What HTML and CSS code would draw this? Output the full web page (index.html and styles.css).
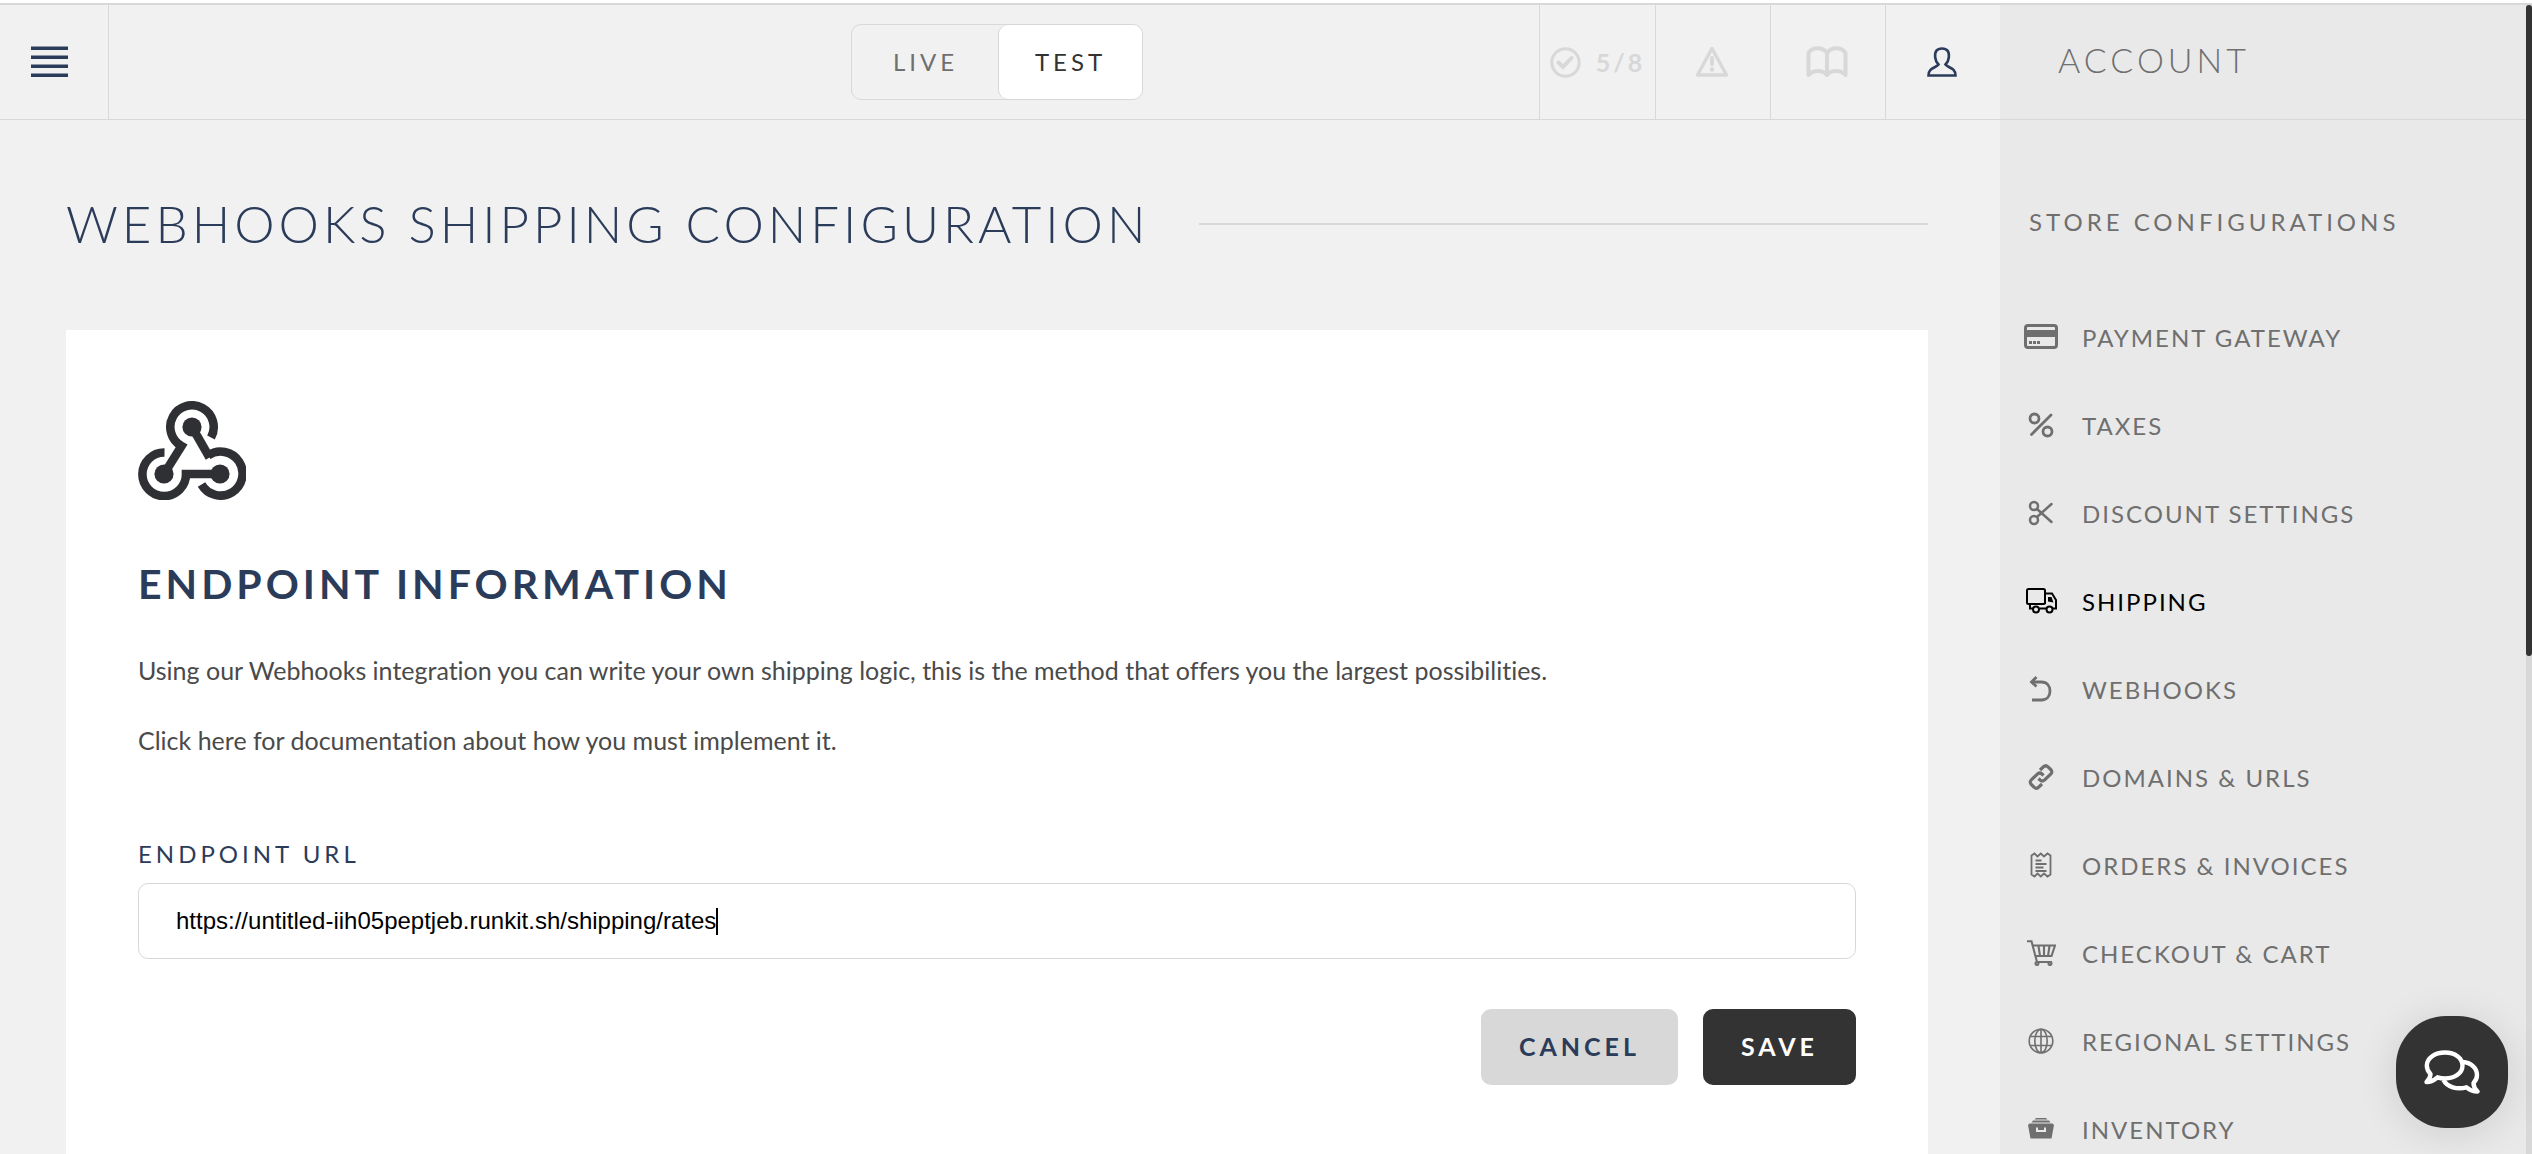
FILE: index.html
```html
<!DOCTYPE html>
<html lang="en">
<head>
<meta charset="utf-8">
<meta name="viewport" content="width=device-width, initial-scale=1">
<title>Webhooks Shipping Configuration</title>
<link rel="stylesheet" href="styles.css">
</head>
<body>
<div class="app">
  <div class="workspace">
    <header class="topbar">
      <button class="menu-button" type="button" aria-label="Menu">
        <svg width="38" height="32" viewBox="0 0 38 32" fill="currentColor"><path d="M0 0.500h37v3.500H0zM0 9.500h37v3.500H0zM0 18.500h37v3.500H0zM0 27.500h37v3.500H0z"/></svg>
      </button>
      <div class="mode-area">
        <div class="mode-switch">
          <button class="mode" type="button">LIVE</button>
          <button class="mode mode-active" type="button">TEST</button>
        </div>
      </div>
      <nav class="tools" aria-label="Tools">
        <a class="tool tool-progress" href="#">
          <svg width="31" height="31" viewBox="0 0 31 31" fill="none" stroke="currentColor" stroke-width="3"><circle cx="15.500" cy="15.500" r="13.700"/><path d="M8.500 15.500l4.500 4.500 8.500-9" stroke-width="4" stroke-linecap="round"/></svg>
          <span>5/8</span>
        </a>
        <a class="tool" href="#" aria-label="Alerts">
          <svg width="34" height="32" viewBox="0 0 34 32" fill="none" stroke="currentColor" stroke-width="3.400" stroke-linejoin="round"><path d="M17 2.500L31.500 29H2.500z"/><path d="M17 12v6" stroke-width="4" stroke-linecap="round"/><circle cx="17" cy="23.500" r="2.200" fill="currentColor" stroke="none"/></svg>
        </a>
        <a class="tool" href="#" aria-label="Documentation">
          <svg width="42" height="32" viewBox="0 0 42 32" fill="none" stroke="currentColor" stroke-width="4" stroke-linejoin="round" stroke-linecap="round"><path d="M21 29C17 23.500 7 23.500 2.500 29V7C6 .500 17 .500 21 7C25 .500 36 .500 39.500 7V29C35 23.500 25 23.500 21 29V7"/></svg>
        </a>
        <a class="tool tool-active" href="#" aria-label="Account">
          <svg width="30" height="30" viewBox="0 0 30 30" fill="none" stroke="currentColor" stroke-width="2.600"><path d="M11.500 17.500C9 15 8.500 13.500 8.200 10.500C7.500 4 10 1.500 15 1.500S22.500 4 21.800 10.500C21.500 13.500 21 15 18.500 17.500C21 21 28.500 20.500 28.500 28.500H1.500C1.500 20.500 9 21 11.500 17.500z"/></svg>
        </a>
      </nav>
    </header>

    <main class="content">
      <div class="page-heading">
        <h1 class="page-title">WEBHOOKS SHIPPING CONFIGURATION</h1>
      </div>
      <section class="card">
        <svg class="logo" width="108" height="99" viewBox="0 0 108 99" fill="none" stroke="currentColor" stroke-width="8.600"><path d="M73 36.500A21.700 21.700 0 1 0 43.500 45L26 73"/><path d="M54 26L71.500 56.500" /><path d="M70 54.500A22 22 0 1 1 63.500 83.500"/><path d="M26.500 51.500A21.800 21.800 0 1 0 48 73H82"/><g fill="currentColor" stroke="none"><circle cx="54" cy="26" r="9.600"/><circle cx="26" cy="73" r="9.600"/><circle cx="82" cy="73" r="9.600"/></g></svg>
        <h2 class="section-title">ENDPOINT INFORMATION</h2>
        <p class="text">Using our Webhooks integration you can write your own shipping logic, this is the method that offers you the largest possibilities.</p>
        <p class="text"><a class="text-link" href="#">Click here for documentation about how you must implement it.</a></p>
        <form class="endpoint-form">
          <label class="field-label" for="endpoint">ENDPOINT URL</label>
          <div class="field">
            <input class="field-input" id="endpoint" type="text" value="https://untitled-iih05peptjeb.runkit.sh/shipping/rates">
            <span class="caret"></span>
          </div>
          <div class="actions">
            <button class="button button-cancel" type="button">CANCEL</button>
            <button class="button button-save" type="submit">SAVE</button>
          </div>
        </form>
      </section>
    </main>
  </div>

  <aside class="sidebar">
    <h2 class="sidebar-title">ACCOUNT</h2>
    <h3 class="group-title">STORE CONFIGURATIONS</h3>
    <nav class="side-nav" aria-label="Store configurations">
      <a class="side-link" href="#"><span class="side-icon"><svg width="34" height="26" viewBox="0 0 34 26"><rect x="1.500" y="1.500" width="31" height="22" rx="2.500" fill="none" stroke="currentColor" stroke-width="3"/><path d="M2 6h30v7H2zM5 17h3v3H5zM9 17h3v3H9zM13 17h3v3h-3z" fill="currentColor"/></svg></span>PAYMENT GATEWAY</a>
      <a class="side-link" href="#"><span class="side-icon"><svg width="26" height="26" viewBox="0 0 26 26" fill="none" stroke="currentColor" stroke-width="2.800" stroke-linecap="round"><circle cx="6.500" cy="6.500" r="4.500"/><circle cx="19.500" cy="19.500" r="4.500"/><path d="M23 3L3.500 22.500"/></svg></span>TAXES</a>
      <a class="side-link" href="#"><span class="side-icon"><svg width="26" height="26" viewBox="0 0 26 26" fill="none" stroke="currentColor" stroke-width="2.500" stroke-linecap="round"><circle cx="6" cy="6" r="4"/><circle cx="6" cy="20" r="4"/><path d="M9 9L23.500 22M9 17L23.500 4"/></svg></span>DISCOUNT SETTINGS</a>
      <a class="side-link side-link-active" href="#"><span class="side-icon"><svg width="31" height="26" viewBox="0 0 31 26" fill="none" stroke="currentColor" stroke-width="2"><rect x="1" y="1" width="18" height="15" rx="1.500"/><path d="M4 16v4.500h3M13.500 20.500h7M26.500 20.500H30V12L26 5.500h-7V16"/><circle cx="10" cy="21.500" r="3"/><circle cx="23.500" cy="21.500" r="3"/><path d="M22 9h3.500l2 5.500-5.500-1z" fill="currentColor" stroke="none"/></svg></span>SHIPPING</a>
      <a class="side-link" href="#"><span class="side-icon"><svg width="24" height="26" viewBox="0 0 24 26" fill="none" stroke="currentColor" stroke-width="2.800"><path d="M3 6H12.500C18 6 21 10 21 15S18 24 12.500 24H3"/><path d="M7.500 1L2.500 6l5 4.500"/></svg></span>WEBHOOKS</a>
      <a class="side-link" href="#"><span class="side-icon"><svg width="26" height="26" viewBox="0 0 26 26" fill="none" stroke="currentColor" stroke-width="3.200"><path d="M12 6L15.500 2.800C17 1.400 18.500 1.400 20 2.800L22.700 5.500C24.200 7 24.200 8.800 22.700 10.200L16.500 16C15 17.300 13.500 17.300 12 16L10.500 14.500"/><path d="M14 20L10.500 23.200C9 24.600 7.500 24.600 6 23.200L3.300 20.500C1.800 19 1.800 17.200 3.300 15.800L9.500 10C11 8.700 12.500 8.700 14 10L15.500 11.500"/></svg></span>DOMAINS &amp; URLS</a>
      <a class="side-link" href="#"><span class="side-icon"><svg width="22" height="26" viewBox="0 0 22 26" fill="none" stroke="currentColor" stroke-width="1.800"><path d="M1.500 3.500L4.500 1.500l3 3 3.300-3 3.200 3 3.500-3 3 2v19l-3 2-3.500-3-3.200 3-3.300-3-3 3-3-2z"/><path d="M5.500 8.500h6M5.500 12h11M5.500 15.500h8M5.500 19h11"/></svg></span>ORDERS &amp; INVOICES</a>
      <a class="side-link" href="#"><span class="side-icon"><svg width="29" height="26" viewBox="0 0 29 26" fill="none" stroke="currentColor" stroke-width="2.100"><path d="M0 1.200h4.500L10 22h15M5.500 5.500H28L24.500 16H8.500M11.500 6l1.500 10M17 6v10M22.500 6L21 16"/><circle cx="10" cy="23.500" r="1.500"/><circle cx="23" cy="23.500" r="1.500"/></svg></span>CHECKOUT &amp; CART</a>
      <a class="side-link" href="#"><span class="side-icon"><svg width="26" height="26" viewBox="0 0 26 26" fill="none" stroke="currentColor" stroke-width="1.600"><circle cx="13" cy="13" r="11.800"/><ellipse cx="13" cy="13" rx="6.200" ry="11.800"/><path d="M13 1v24M2.500 8.500h21M2.500 17.500h21"/></svg></span>REGIONAL SETTINGS</a>
      <a class="side-link" href="#"><span class="side-icon"><svg width="26" height="22" viewBox="0 0 26 22" fill="currentColor"><path d="M8 0h10l1.500 1.500h-13zM5 2.500h16l1.500 2h-19z"/><path fill-rule="evenodd" d="M1.500 5.500H24.500L26 7 23.500 20.500H2.500L0 7zM8 9.500v4.500h10v-4.500h-2v2.500h-6v-2.500z"/></svg></span>INVENTORY</a>
    </nav>
  </aside>
  <div class="scroll-track"><div class="scroll-thumb"></div></div>
</div>
<button class="chat-button" type="button" aria-label="Chat">
  <svg width="56" height="44" viewBox="0 0 56 44" fill="none" stroke="currentColor" stroke-width="4.400" stroke-linejoin="round"><path d="M21 2.500C31 2.500 38.500 8 38.500 15.500S31 28.500 21 28.500C18 28.500 15.500 28 13.500 27.300C10 30.500 6.500 32 2.500 32C5 29.500 6.500 27 6.500 24C4 21.500 2.800 18.800 2.800 15.500C2.800 8 11 2.500 21 2.500z"/><path d="M38.500 12C47 12.500 53 18 53 25C53 28 52 30.500 49.500 33C49.500 36 51 39 53.500 41.500C49 41.500 45.500 40 42.500 37.300C33 40 23 37 19.500 30"/></svg>
</button>
</body>
</html>
```
FILE: styles.css
```css
* {
  box-sizing: border-box;
}

body {
  margin: 0;
  padding-top: 3px;
  height: 100vh;
  overflow: hidden;
  background: #fff;
  color: #333;
  font-family: Lato, "Liberation Sans", sans-serif;
  font-size: 24px;
  font-variant-ligatures: none;
}

h1, h2, h3, p {
  margin: 0;
}

a {
  color: inherit;
  text-decoration: none;
}

button {
  padding: 0;
  border: 0;
  background: none;
  color: inherit;
  font: inherit;
}

svg {
  display: block;
  flex: none;
}

.app {
  display: grid;
  grid-template-columns: minmax(0, 1fr) 526px 6px;
  height: 100%;
  border-top: 2px solid #d8d8d8;
  background: #f1f1f1;
}

.workspace {
  display: flex;
  flex-direction: column;
  min-width: 0;
}

/* Top bar */
.topbar {
  display: flex;
  flex: none;
  height: 115px;
  border-bottom: 1px solid #d8d8d8;
}

.menu-button {
  display: flex;
  align-items: center;
  width: 109px;
  padding-left: 31px;
  border-right: 1px solid #d8d8d8;
  color: #2b3c5a;
}

.mode-area {
  display: flex;
  flex: 1;
  align-items: center;
  justify-content: center;
  padding-left: 346px;
}

.mode-switch {
  display: flex;
  height: 76px;
  border: 1px solid #d8d8d8;
  border-radius: 10px;
}

.mode {
  width: 147px;
  padding-bottom: 2px;
  border-radius: 9px;
  color: #6f6f6f;
  font-weight: 400;
  letter-spacing: 4px;
}

.mode-active {
  width: 143px;
  background: #fff;
  box-shadow: -1px 0 0 #d8d8d8;
  color: #333;
}

.tools {
  display: flex;
}

.tool {
  display: flex;
  align-items: center;
  justify-content: center;
  width: 115px;
  padding-right: 2px;
  border-left: 1px solid #d8d8d8;
  color: #d8d8d8;
}

.tool-progress {
  gap: 15px;
  width: 116px;
  padding-right: 0;
  font-size: 25px;
  font-weight: 700;
  letter-spacing: 3px;
}

.tool-active {
  color: #2b3c5a;
}

/* Page content */
.content {
  display: flex;
  flex: 1;
  flex-direction: column;
  padding: 69px 72px 0 66px;
}

.page-heading {
  display: flex;
  align-items: center;
  gap: 50px;
  height: 70px;
  margin-bottom: 71px;
}

.page-heading::after {
  content: "";
  flex: 1;
  height: 2px;
  background: #d8d8d8;
}

.page-title {
  color: #2b3c5a;
  font-size: 51px;
  font-weight: 300;
  letter-spacing: 4px;
  line-height: 70px;
  white-space: nowrap;
}

.card {
  flex: 1;
  padding: 71px 72px;
  background: #fff;
}

.logo {
  color: #2f3034;
}

.section-title {
  margin: 60px 0 44px;
  color: #2b3c5a;
  font-size: 41px;
  font-weight: 700;
  letter-spacing: 4px;
  line-height: 48px;
}

.text {
  margin-bottom: 34px;
  color: #4a4a4a;
  font-size: 25px;
  line-height: 36px;
}

.endpoint-form {
  padding-top: 44px;
}

.field-label {
  display: block;
  margin-bottom: 11px;
  color: #2b3c5a;
  letter-spacing: 4px;
  line-height: 36px;
}

.field {
  display: flex;
  align-items: center;
  height: 76px;
  padding: 0 37px;
  border: 1px solid #d8d8d8;
  border-radius: 10px;
}

.field-input {
  field-sizing: content;
  padding: 0;
  border: 0;
  outline: 0;
  background: none;
  color: #000;
  font-family: "Liberation Sans", Arial, sans-serif;
  font-size: 24px;
}

.caret {
  width: 2px;
  height: 27px;
  background: #000;
}

.actions {
  display: flex;
  justify-content: flex-end;
  gap: 25px;
  margin-top: 50px;
}

.button {
  height: 76px;
  padding: 0 38px 2px;
  border-radius: 10px;
  font-size: 25px;
  font-weight: 700;
  letter-spacing: 4px;
}

.button-cancel {
  background: #d8d8d8;
  color: #2b3c5a;
}

.button-save {
  background: #333;
  color: #fff;
}

/* Account sidebar */
.sidebar {
  overflow: hidden;
  background: #e9e9e9;
  color: #6f6f6f;
}

.sidebar-title {
  height: 115px;
  padding-left: 58px;
  border-bottom: 1px solid #d8d8d8;
  font-size: 34px;
  font-weight: 300;
  letter-spacing: 4px;
  line-height: 110px;
}

.group-title {
  padding: 84px 0 53px 29px;
  font-size: 24px;
  font-weight: 400;
  letter-spacing: 4px;
  line-height: 36px;
}

.side-nav {
  display: flex;
  flex-direction: column;
}

.side-link {
  display: flex;
  align-items: center;
  gap: 22px;
  height: 88px;
  padding-left: 22px;
  letter-spacing: 2px;
}

.side-link-active {
  color: #000;
}

.side-icon {
  display: flex;
  justify-content: center;
  width: 38px;
}

.scroll-track {
  background: #d8d8d8;
}

.scroll-thumb {
  height: 56.6%;
  border-radius: 6px;
  background: #333;
}

/* Floating chat launcher */
.chat-button {
  position: fixed;
  right: 24px;
  bottom: 26px;
  display: flex;
  align-items: center;
  justify-content: center;
  width: 112px;
  height: 112px;
  border-radius: 50px;
  background: #333;
  box-shadow: 0 4px 40px rgba(0, 0, 0, 0.12);
  color: #fff;
}
```
